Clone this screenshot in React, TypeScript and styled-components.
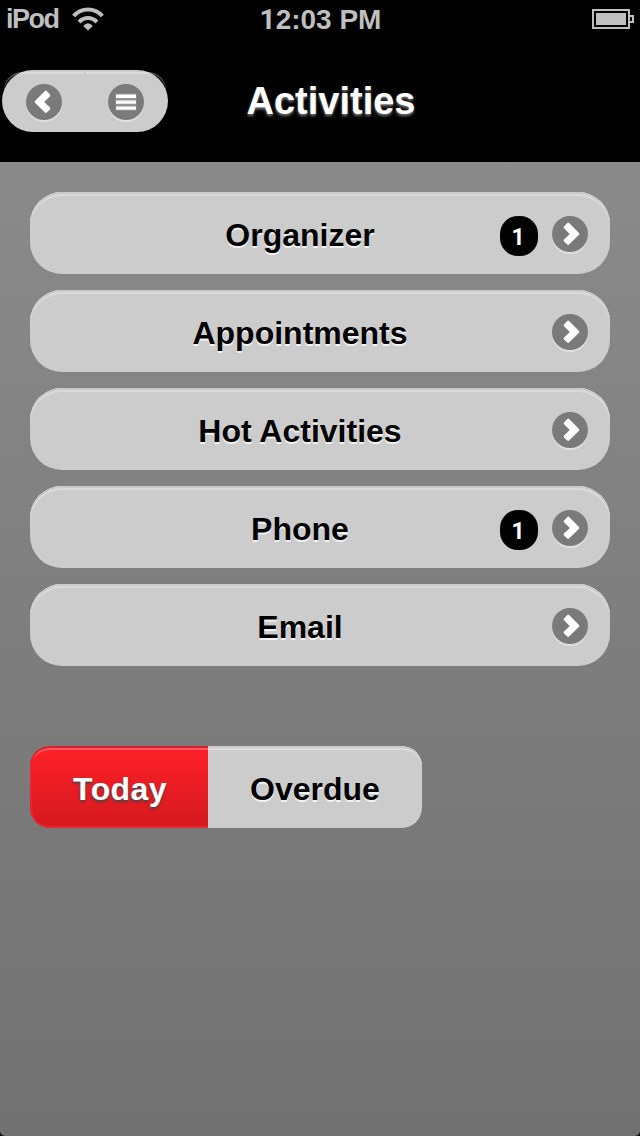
import React from "react";
import styled, { createGlobalStyle } from "styled-components";

const Global = createGlobalStyle`
  body { margin: 0; background: #000; font-family: "Liberation Sans", Arial, Helvetica, sans-serif; }
  * { box-sizing: border-box; }
`;

const Screen = styled.div`
  width: 640px;
  height: 1136px;
  display: flex;
  flex-direction: column;
  overflow: hidden;
  background: #000;
`;

const StatusBar = styled.div`
  height: 40px;
  display: grid;
  grid-template-columns: 1fr auto 1fr;
  align-items: center;
  padding: 0 6px 2px 6px;
  color: #bfbfbf;
  font-size: 28px;
  line-height: 32px;
  font-weight: bold;
`;

const Carrier = styled.div`
  display: flex;
  align-items: center;
  gap: 13px;
  font-size: 27px;
  letter-spacing: -1.5px;
`;

const Clock = styled.div`
  padding: 1px 0 0 1px;
`;

const PlainOne = styled.span`
  font-family: Roboto, sans-serif;
  line-height: 1;
`;

const BatteryArea = styled.div`
  display: flex;
  justify-content: flex-end;
`;

const Header = styled.header`
  height: 122px;
  display: grid;
  grid-template-columns: 168px 322px 1fr;
  padding: 30px 0 0 2px;
`;

const NavGroup = styled.nav`
  position: relative;
  width: 166px;
  height: 62px;
  padding: 0 24px;
  display: flex;
  align-items: center;
  justify-content: space-between;
  border-radius: 31px;
  background: #ccc;

  &::before,
  &::after {
    content: "";
    position: absolute;
    top: 2px;
    height: 58px;
    box-shadow: inset 0 2px 0 rgba(255, 255, 255, 0.3);
  }
  &::before {
    left: 2px;
    width: 80px;
    border-radius: 18px 0 0 18px;
  }
  &::after {
    right: 2px;
    width: 80px;
    border-radius: 0 18px 18px 0;
  }
`;

const Title = styled.h1`
  margin: 0;
  text-align: center;
  color: #fff;
  font-size: 38px;
  line-height: 62px;
  text-shadow: 0 2px 3px #777;
`;

const Content = styled.main`
  flex: 1;
  padding: 30px;
  border-radius: 0 0 5px 5px;
  background: linear-gradient(#8a8a8a, #717171);
`;

const List = styled.div`
  display: flex;
  flex-direction: column;
  gap: 16px;
`;

const Row = styled.button`
  height: 82px;
  width: 580px;
  display: grid;
  grid-template-columns: 400px 38px 14px 36px;
  align-items: center;
  padding: 0 0 0 70px;
  border: 0;
  border-radius: 32px;
  background: #ccc;
  box-shadow: inset 0 2px 0 #cacaca, inset 0 4px 0 #dbdbdb;
  font-family: inherit;
`;

const RowLabel = styled.span`
  text-align: center;
  color: #000;
  font-size: 32px;
  font-weight: bold;
  line-height: 40px;
  padding-top: 3px;
  text-shadow: 0 2px 0 #f2f2f2;
`;

const Badge = styled.span`
  grid-column: 2;
  height: 40px;
  margin-top: 6px;
  padding-right: 2px;
  border-radius: 18px;
  background: #000;
  color: #fff;
  font-family: Roboto, sans-serif;
  font-size: 23px;
  font-weight: bold;
  line-height: 43px;
  text-align: center;
`;

const RoundIcon = styled.svg`
  grid-column: 4;
  display: block;
  width: 36px;
  height: 36px;
  margin-top: 2px;
  border-radius: 18px;
  background: #7a7a7a;
  box-shadow: 0 2px 0 rgba(255, 255, 255, 0.4);
`;

const Segments = styled.div`
  display: flex;
  width: 392px;
  height: 82px;
  margin-top: 80px;
  border-radius: 20px;
  overflow: hidden;
`;

const Segment = styled.button<{ $active?: boolean }>`
  width: ${(p) => (p.$active ? 178 : 214)}px;
  padding: 5px 0 0 ${(p) => (p.$active ? 2 : 0)}px;
  border: 0;
  border-radius: ${(p) => (p.$active ? "20px 0 0 20px" : "0 20px 20px 0")};
  font: bold 32px "Liberation Sans", Arial, sans-serif;
  letter-spacing: ${(p) => (p.$active ? "0.4px" : "normal")};
  color: ${(p) => (p.$active ? "#fff" : "#000")};
  background: ${(p) => (p.$active ? "linear-gradient(#ff2028, #d4191f)" : "#ccc")};
  text-shadow: ${(p) => (p.$active ? "0 2px 3px #444" : "0 2px 0 #f2f2f2")};
  box-shadow: ${(p) =>
    p.$active
      ? "inset 0 2px 0 #dc1f29, inset 2px 0 0 #ea2530, inset 0 -2px 0 #ea2530, inset 0 4px 0 #ff5a60"
      : "inset 0 2px 0 #cacaca, inset 0 4px 0 #dbdbdb"};
`;

const Chevron = ({ left }: { left?: boolean }) => (
  <RoundIcon viewBox="0 0 36 36">
    <path
      transform={left ? "translate(36 0) scale(-1 1)" : undefined}
      d="M12 10.4 15.3 7Q16.2 6.2 17.1 7L27 17Q27.9 17.9 27 18.8L17.1 28.6Q16.2 29.4 15.3 28.6L12 25.4Q11.2 24.5 12 23.6L17.8 17.9 12 12.2Q11.2 11.3 12 10.4Z"
      fill="#fff"
    />
  </RoundIcon>
);

const Bars = () => (
  <RoundIcon viewBox="0 0 36 36">
    <path d="M7.5 9.5h21v17h-21z" fill="#929292" />
    <path d="M8 10.5h20v3.4H8zM8 16.5h20v3.2H8zM8 22.5h20v3.2H8z" fill="#fff" />
  </RoundIcon>
);

const Wifi = () => (
  <svg width="32" height="24" viewBox="0 0 32 24">
    <g fill="none" stroke="#bfbfbf" strokeWidth="4">
      <path d="M1.6 9Q7.5 2.4 16 2.4T30.4 9" />
      <path d="M7 15Q11 11 16 11T25 15" />
    </g>
    <path d="M16 23.5 11.2 18.9Q16 13.8 20.8 18.9Z" fill="#bfbfbf" />
  </svg>
);

const Battery = () => (
  <svg width="42" height="20" viewBox="0 0 42 20">
    <path d="M1 1h36v18H1z" fill="none" stroke="#bfbfbf" strokeWidth="2" />
    <path d="M4 4h30v12H4z" fill="#bfbfbf" />
    <path d="M38 7h3v6h-3" fill="none" stroke="#bfbfbf" strokeWidth="2" />
  </svg>
);

const rows: { label: string; count?: number }[] = [
  { label: "Organizer", count: 1 },
  { label: "Appointments" },
  { label: "Hot Activities" },
  { label: "Phone", count: 1 },
  { label: "Email" },
];

export default function App() {
  return (
    <Screen>
      <Global />
      <StatusBar>
        <Carrier>
          <span>iPod</span>
          <Wifi />
        </Carrier>
        <Clock>
          <PlainOne>1</PlainOne>2:03 PM
        </Clock>
        <BatteryArea>
          <Battery />
        </BatteryArea>
      </StatusBar>
      <Header>
        <NavGroup>
          <Chevron left />
          <Bars />
        </NavGroup>
        <Title>Activities</Title>
      </Header>
      <Content>
        <List>
          {rows.map((row) => (
            <Row key={row.label}>
              <RowLabel>{row.label}</RowLabel>
              {row.count !== undefined && <Badge>{row.count}</Badge>}
              <Chevron />
            </Row>
          ))}
        </List>
        <Segments>
          <Segment $active>Today</Segment>
          <Segment>Overdue</Segment>
        </Segments>
      </Content>
    </Screen>
  );
}
